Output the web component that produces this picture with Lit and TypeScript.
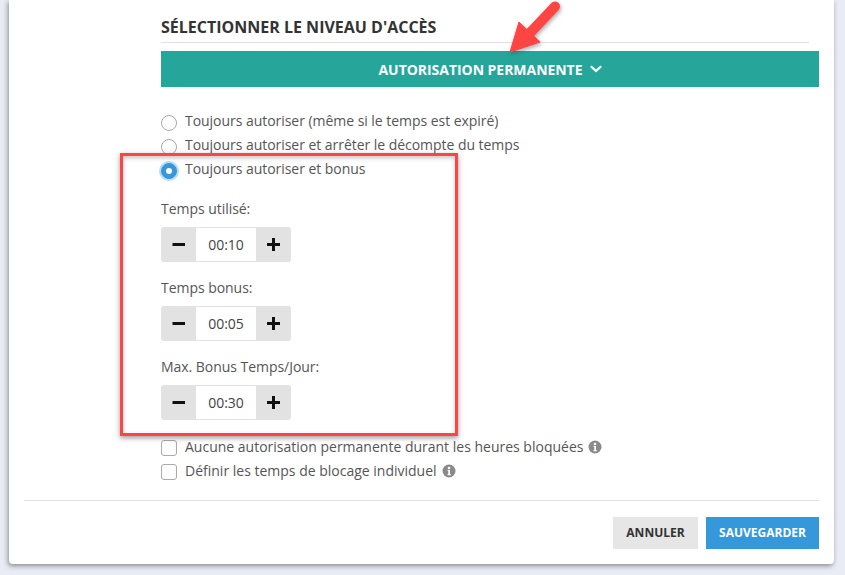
import { LitElement, html, css, svg } from "lit";
import { customElement } from "lit/decorators.js";

@customElement("app-root")
export class AppRoot extends LitElement {
  static styles = css`
    :host {
      display: block;
      position: relative;
      width: 845px;
      height: 575px;
      overflow: hidden;
      background: #e9ecf4;
      font-family: "Open Sans", sans-serif;
      font-size: 14px;
      color: #555;
    }
    .card {
      box-sizing: border-box;
      width: 825px;
      height: 564px;
      margin-left: 9px;
      padding: 0 15px 15px;
      background: #fff;
      border-radius: 0 0 4px 4px;
      box-shadow: -1px 2px 5px rgba(60, 60, 70, 0.55);
    }
    .content {
      margin-left: 137px;
      padding-top: 17px;
    }
    h2 {
      margin: 0 10px 0 0;
      padding-bottom: 5px;
      border-bottom: 1px solid #e2e2e2;
      font-size: 16px;
      line-height: 20px;
      font-weight: 700;
      color: #333;
      text-transform: uppercase;
    }
    .bar {
      display: flex;
      align-items: center;
      justify-content: center;
      gap: 7px;
      height: 36px;
      margin-top: 8px;
      background: #26a69a;
      color: #fff;
      font-size: 14px;
      font-weight: 700;
      letter-spacing: -0.04px;
      text-transform: uppercase;
    }
    .bar svg {
      display: block;
    }
    .options {
      margin-top: 21px;
      letter-spacing: -0.04px;
    }
    .options .row {
      line-height: 26px;
    }
    .row {
      display: flex;
      gap: 8px;
      height: 24px;
      line-height: 24px;
      align-items: flex-start;
    }
    .radio,
    .check {
      box-sizing: border-box;
      flex: none;
      width: 16px;
      height: 16px;
      margin-top: 7px;
      background: #fff;
      border: 1px solid #aaa;
    }
    .radio {
      border-radius: 50%;
    }
    .radio.on {
      display: flex;
      align-items: center;
      justify-content: center;
      background: #3498db;
      border-color: #3498db;
      box-shadow: 0 0 0 2px #b9dbf3;
    }
    .radio.on::after {
      content: "";
      width: 6px;
      height: 6px;
      border-radius: 50%;
      background: #fff;
    }
    .check {
      border-radius: 3px;
      margin-top: 5px;
    }
    .field-label {
      margin-top: 16px;
      line-height: 20px;
      letter-spacing: -0.04px;
    }
    .field-label.first {
      margin-top: 19px;
    }
    .stepper {
      display: flex;
      width: 130px;
      height: 35px;
      margin-top: 8px;
    }
    .step {
      display: flex;
      align-items: center;
      justify-content: center;
      width: 35px;
      background: #e2e2e2;
    }
    .step.minus {
      border-radius: 3px 0 0 3px;
    }
    .step.plus {
      border-radius: 0 3px 3px 0;
    }
    .value {
      box-sizing: border-box;
      width: 60px;
      line-height: 33px;
      text-align: center;
      border: solid #e2e2e2;
      border-width: 1px 0;
      color: #444;
    }
    .checks {
      margin-top: 15px;
    }
    .info {
      display: block;
      flex: none;
      margin: 5px 0 0 -3px;
    }
    footer {
      display: flex;
      justify-content: flex-end;
      gap: 8px;
      margin-top: 17px;
      padding-top: 16px;
      border-top: 1px solid #e2e2e2;
    }
    .btn {
      height: 32px;
      line-height: 32px;
      text-align: center;
      font-size: 12px;
      font-weight: 700;
      text-transform: uppercase;
    }
    .cancel {
      width: 85px;
      background: #e6e6e6;
      color: #333;
    }
    .save {
      width: 113px;
      background: #3498db;
      color: #fff;
    }
    .frame {
      position: absolute;
      box-sizing: border-box;
      left: 120px;
      top: 153px;
      width: 338px;
      height: 283px;
      border: 3px solid #ff4444;
      box-shadow: 0 2px 5px rgba(60, 60, 60, 0.5), inset 0 2px 4px rgba(60, 60, 60, 0.3);
    }
    .arrow {
      position: absolute;
      left: 500px;
      top: 0;
      filter: drop-shadow(1px 2px 2px rgba(60, 60, 60, 0.45));
    }
  `;

  private stepper(value: string) {
    return html`<div class="stepper">
      <div class="step minus">
        <svg width="13" height="13" viewBox="0 0 13 13"><rect x="0.5" y="5" width="12.5" height="3" fill="#111"></rect></svg>
      </div>
      <div class="value">${value}</div>
      <div class="step plus">
        <svg width="13" height="13" viewBox="0 0 13 13"><path d="M0 5h5V0h3v5h5v3H8v5H5V8H0z" fill="#111"></path></svg>
      </div>
    </div>`;
  }

  private info() {
    return html`<svg class="info" width="14" height="14" viewBox="0 0 14 14">
      <circle cx="7" cy="7" r="6.5" fill="#8a8a8a"></circle>
      ${svg`<circle cx="7" cy="4" r="1.3" fill="#fff"></circle><path d="M5.6 6h2.4v4.2h.9v1H5.4v-1h.9V7h-.7z" fill="#fff"></path>`}
    </svg>`;
  }

  render() {
    return html`
      <div class="card">
        <div class="content">
          <h2>Sélectionner le niveau d'accès</h2>
          <div class="bar">
            <span>Autorisation permanente</span>
            <svg width="12" height="8" viewBox="0 0 12 8"><path d="M0.8 1.2l5.2 4.8 5.2-4.8" fill="none" stroke="#fff" stroke-width="2.2"></path></svg>
          </div>
          <div class="options">
            <div class="row"><span class="radio"></span><span>Toujours autoriser (même si le temps est expiré)</span></div>
            <div class="row"><span class="radio"></span><span>Toujours autoriser et arrêter le décompte du temps</span></div>
            <div class="row"><span class="radio on"></span><span>Toujours autoriser et bonus</span></div>
          </div>
          <div class="field-label first">Temps utilisé:</div>
          ${this.stepper("00:10")}
          <div class="field-label">Temps bonus:</div>
          ${this.stepper("00:05")}
          <div class="field-label">Max. Bonus Temps/Jour:</div>
          ${this.stepper("00:30")}
          <div class="checks">
            <div class="row"><span class="check"></span><span>Aucune autorisation permanente durant les heures bloquées</span>${this.info()}</div>
            <div class="row"><span class="check"></span><span>Définir les temps de blocage individuel</span>${this.info()}</div>
          </div>
        </div>
        <footer>
          <div class="btn cancel">Annuler</div>
          <div class="btn save">Sauvegarder</div>
        </footer>
      </div>
      <div class="frame"></div>
      <svg class="arrow" width="70" height="60" viewBox="500 0 70 60">
        <path d="M510 52L519 22 540 42z" fill="#ff4444" stroke="#ff4444" stroke-width="1" stroke-linejoin="round"></path>
        <path d="M528 35L555 6.5" stroke="#ff4444" stroke-width="10" stroke-linecap="round" fill="none"></path>
      </svg>
    `;
  }
}
